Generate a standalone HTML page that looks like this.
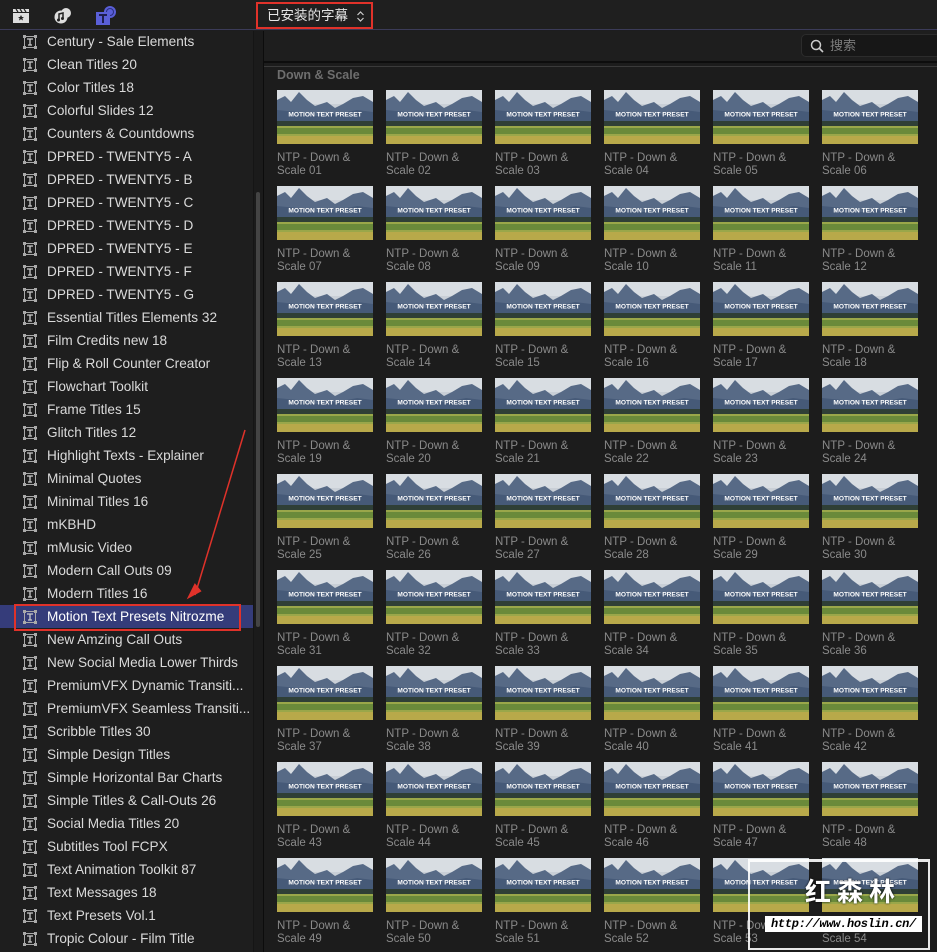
<!DOCTYPE html>
<html><head><meta charset="utf-8"><style>
*{margin:0;padding:0;box-sizing:border-box}
body{width:937px;height:952px;overflow:hidden;background:#1d1d1f;font-family:"Liberation Sans","Noto Sans CJK SC",sans-serif;position:relative}
#top{position:absolute;left:0;top:0;width:937px;height:30px;background:#1f1f1f;border-bottom:1px solid #3b3b58}
#dd{position:absolute;left:256px;top:2px;width:117px;height:27px;border:2px solid #e0322a;color:#e6e6e6;font-size:13.5px;line-height:23px;padding-left:9px}
#side{position:absolute;left:0;top:31px;width:253px;height:921px;background:#1e1e1e;overflow:hidden}
#track{position:absolute;left:253px;top:31px;width:10px;height:921px;background:#1b1b1b;border-left:1px solid #151515}
#thumb{position:absolute;left:256px;top:192px;width:4px;height:435px;background:#444;border-radius:2px}
#div{position:absolute;left:263px;top:31px;width:1px;height:921px;background:#0c0c0c}
.it{position:absolute;left:0;width:253px;height:23px;line-height:23px;color:#dadada;font-size:13.6px;padding-left:47px;white-space:nowrap}
.it svg{position:absolute;left:23px;top:5px}
.sel{background:#353c7a;color:#fff}
.selb{position:absolute;left:14px;top:604px;width:227px;height:27px;border:2px solid #e0322a}
#main{position:absolute;left:264px;top:31px;width:673px;height:921px;background:#1c1c1c}
#sbar{position:absolute;left:264px;top:31px;width:673px;height:32px;background:#1e1e1e;border-bottom:2px solid #0d0d0d}
#search{position:absolute;left:801px;top:34px;width:140px;height:23px;background:#171717;border:1px solid #2c2c2c;border-radius:5px;color:#7c7c7c;font-size:13px;line-height:21px;padding-left:28px}
#line2{position:absolute;left:264px;top:66px;width:673px;height:1px;background:#3a3a3a}
#hdr{position:absolute;left:277px;top:68px;color:#6e6e6e;font-size:12.5px;font-weight:bold}
.c{position:absolute;width:100px}
.c svg{display:block}
.c p{color:#8a8a8a;font-size:11.5px;line-height:13px;margin-top:8px}
#wm{position:absolute;left:748px;top:859px;width:182px;height:91px;border:2px solid rgba(255,255,255,.9);border-top-width:3px}
#wm1{position:absolute;left:805px;top:872px;color:#fff;font-size:26px;font-weight:bold;letter-spacing:6px;text-shadow:0 0 2px #000}
#wm2{position:absolute;left:765px;top:916px;width:157px;height:16px;background:#fff;color:#000;font:italic bold 12px "Liberation Mono",monospace;line-height:16px;text-align:center;letter-spacing:-0.3px}
</style></head><body>
<svg width="0" height="0" style="position:absolute"><defs>
<symbol id="t" viewBox="0 0 96 54">
<rect width="96" height="54" fill="#c9cfd6"/>
<rect width="96" height="14" fill="#d8dde2"/>
<polygon points="0,10 8,6 14,12 22,2 30,10 38,16 50,12 58,18 66,14 76,8 86,6 96,12 96,38 0,38" fill="#576a86"/>
<polygon points="0,20 20,22 40,26 60,24 80,20 96,22 96,38 0,38" fill="#465a78"/>
<rect y="31" width="96" height="5" fill="#2f3f36"/>
<rect y="36" width="96" height="18" fill="#9aa74a"/>
<rect y="38" width="96" height="6" fill="#6a8a3a"/>
<rect y="46" width="96" height="8" fill="#b8a94a"/>
<text x="48" y="26.5" fill="#fff" font-size="6.6" font-weight="bold" text-anchor="middle" font-family="Liberation Sans,sans-serif">MOTION TEXT PRESET</text>
</symbol>
<symbol id="ic" viewBox="0 0 14 14"><rect x="1.5" y="1.5" width="11" height="11" fill="none" stroke="#aaa" stroke-width="1"/><rect x="0" y="0" width="3" height="3" fill="#aaa"/><rect x="11" y="0" width="3" height="3" fill="#aaa"/><rect x="0" y="11" width="3" height="3" fill="#aaa"/><rect x="11" y="11" width="3" height="3" fill="#aaa"/><path d="M4 4H10M7 4V10M5 10H9" stroke="#ccc" stroke-width="1.3" fill="none"/></symbol>
</defs></svg>
<div id="top">
<svg style="position:absolute;left:12px;top:7px" width="18" height="17" viewBox="0 0 18 17"><rect x="1" y="6" width="16" height="10" fill="#ddd"/><path d="M1 2L17 2L17 5L1 5Z" fill="#ddd"/><path d="M4 2l2 3M8 2l2 3M12 2l2 3" stroke="#222" stroke-width="1.2"/><path d="M9 8l1 2h2l-1.6 1.3.6 2.2L9 12.3 7 13.5l.6-2.2L6 10h2z" fill="#222"/></svg>
<svg style="position:absolute;left:53px;top:6px" width="20" height="19" viewBox="0 0 20 19"><circle cx="13" cy="7" r="5" fill="#ddd"/><circle cx="8" cy="11" r="6.5" fill="#ddd"/><path d="M6 14V8l4-1v5" stroke="#222" stroke-width="1.5" fill="none"/><circle cx="5.5" cy="14" r="1.5" fill="#222"/><circle cx="9.5" cy="12.5" r="1.5" fill="#222"/></svg>
<svg style="position:absolute;left:95px;top:5px" width="22" height="20" viewBox="0 0 22 20"><circle cx="15" cy="7" r="6" fill="#5a5fd8"/><circle cx="15" cy="7" r="3.5" fill="none" stroke="#2a2e80" stroke-width="1"/><rect x="1" y="7" width="14" height="13" fill="#5a5fd8"/><path d="M4 10H12M8 10V18" stroke="#1e1e50" stroke-width="2"/></svg>
<div id="dd">已安装的字幕<svg style="position:absolute;left:98px;top:7px" width="9" height="11" viewBox="0 0 9 11"><path d="M1.5 4L4.5 1L7.5 4M1.5 7L4.5 10L7.5 7" stroke="#ccc" stroke-width="1.2" fill="none"/></svg></div>
</div>
<div id="side">
<div class="it" style="top:-1px"><svg width="14" height="14"><use href="#ic"/></svg>Century - Sale Elements</div>
<div class="it" style="top:22px"><svg width="14" height="14"><use href="#ic"/></svg>Clean Titles 20</div>
<div class="it" style="top:45px"><svg width="14" height="14"><use href="#ic"/></svg>Color Titles 18</div>
<div class="it" style="top:68px"><svg width="14" height="14"><use href="#ic"/></svg>Colorful Slides 12</div>
<div class="it" style="top:91px"><svg width="14" height="14"><use href="#ic"/></svg>Counters &amp; Countdowns</div>
<div class="it" style="top:114px"><svg width="14" height="14"><use href="#ic"/></svg>DPRED - TWENTY5 - A</div>
<div class="it" style="top:137px"><svg width="14" height="14"><use href="#ic"/></svg>DPRED - TWENTY5 - B</div>
<div class="it" style="top:160px"><svg width="14" height="14"><use href="#ic"/></svg>DPRED - TWENTY5 - C</div>
<div class="it" style="top:183px"><svg width="14" height="14"><use href="#ic"/></svg>DPRED - TWENTY5 - D</div>
<div class="it" style="top:206px"><svg width="14" height="14"><use href="#ic"/></svg>DPRED - TWENTY5 - E</div>
<div class="it" style="top:229px"><svg width="14" height="14"><use href="#ic"/></svg>DPRED - TWENTY5 - F</div>
<div class="it" style="top:252px"><svg width="14" height="14"><use href="#ic"/></svg>DPRED - TWENTY5 - G</div>
<div class="it" style="top:275px"><svg width="14" height="14"><use href="#ic"/></svg>Essential Titles Elements 32</div>
<div class="it" style="top:298px"><svg width="14" height="14"><use href="#ic"/></svg>Film Credits new 18</div>
<div class="it" style="top:321px"><svg width="14" height="14"><use href="#ic"/></svg>Flip &amp; Roll Counter Creator</div>
<div class="it" style="top:344px"><svg width="14" height="14"><use href="#ic"/></svg>Flowchart Toolkit</div>
<div class="it" style="top:367px"><svg width="14" height="14"><use href="#ic"/></svg>Frame Titles 15</div>
<div class="it" style="top:390px"><svg width="14" height="14"><use href="#ic"/></svg>Glitch Titles 12</div>
<div class="it" style="top:413px"><svg width="14" height="14"><use href="#ic"/></svg>Highlight Texts - Explainer</div>
<div class="it" style="top:436px"><svg width="14" height="14"><use href="#ic"/></svg>Minimal Quotes</div>
<div class="it" style="top:459px"><svg width="14" height="14"><use href="#ic"/></svg>Minimal Titles 16</div>
<div class="it" style="top:482px"><svg width="14" height="14"><use href="#ic"/></svg>mKBHD</div>
<div class="it" style="top:505px"><svg width="14" height="14"><use href="#ic"/></svg>mMusic Video</div>
<div class="it" style="top:528px"><svg width="14" height="14"><use href="#ic"/></svg>Modern Call Outs 09</div>
<div class="it" style="top:551px"><svg width="14" height="14"><use href="#ic"/></svg>Modern Titles 16</div>
<div class="it sel" style="top:574px"><svg width="14" height="14"><use href="#ic"/></svg>Motion Text Presets Nitrozme</div>
<div class="it" style="top:597px"><svg width="14" height="14"><use href="#ic"/></svg>New Amzing Call Outs</div>
<div class="it" style="top:620px"><svg width="14" height="14"><use href="#ic"/></svg>New Social Media Lower Thirds</div>
<div class="it" style="top:643px"><svg width="14" height="14"><use href="#ic"/></svg>PremiumVFX Dynamic Transiti...</div>
<div class="it" style="top:666px"><svg width="14" height="14"><use href="#ic"/></svg>PremiumVFX Seamless Transiti...</div>
<div class="it" style="top:689px"><svg width="14" height="14"><use href="#ic"/></svg>Scribble Titles 30</div>
<div class="it" style="top:712px"><svg width="14" height="14"><use href="#ic"/></svg>Simple Design Titles</div>
<div class="it" style="top:735px"><svg width="14" height="14"><use href="#ic"/></svg>Simple Horizontal Bar Charts</div>
<div class="it" style="top:758px"><svg width="14" height="14"><use href="#ic"/></svg>Simple Titles &amp; Call-Outs 26</div>
<div class="it" style="top:781px"><svg width="14" height="14"><use href="#ic"/></svg>Social Media Titles 20</div>
<div class="it" style="top:804px"><svg width="14" height="14"><use href="#ic"/></svg>Subtitles Tool FCPX</div>
<div class="it" style="top:827px"><svg width="14" height="14"><use href="#ic"/></svg>Text Animation Toolkit 87</div>
<div class="it" style="top:850px"><svg width="14" height="14"><use href="#ic"/></svg>Text Messages 18</div>
<div class="it" style="top:873px"><svg width="14" height="14"><use href="#ic"/></svg>Text Presets Vol.1</div>
<div class="it" style="top:896px"><svg width="14" height="14"><use href="#ic"/></svg>Tropic Colour - Film Title</div>
</div>
<div class="selb"></div>
<svg style="position:absolute;left:185px;top:425px" width="65" height="180"><path d="M60 5L10 170" stroke="#e0322a" stroke-width="1.5"/><path d="M4 172L10 160L15 166Z" fill="#e0322a" stroke="#e0322a" stroke-width="2"/></svg>
<div id="track"></div><div id="thumb"></div><div id="div"></div>
<div id="main"></div>
<div id="sbar"></div>
<div id="search"><svg style="position:absolute;left:8px;top:4px" width="14" height="14"><circle cx="6" cy="6" r="4.5" stroke="#ccc" stroke-width="1.5" fill="none"/><path d="M9.5 9.5L13 13" stroke="#ccc" stroke-width="1.6"/></svg>搜索</div>
<div id="line2"></div>
<div id="hdr">Down &amp; Scale</div>
<div class="c" style="left:277px;top:90px"><svg width="96" height="54"><use href="#t"/></svg><p>NTP - Down &amp;<br>Scale 01</p></div>
<div class="c" style="left:386px;top:90px"><svg width="96" height="54"><use href="#t"/></svg><p>NTP - Down &amp;<br>Scale 02</p></div>
<div class="c" style="left:495px;top:90px"><svg width="96" height="54"><use href="#t"/></svg><p>NTP - Down &amp;<br>Scale 03</p></div>
<div class="c" style="left:604px;top:90px"><svg width="96" height="54"><use href="#t"/></svg><p>NTP - Down &amp;<br>Scale 04</p></div>
<div class="c" style="left:713px;top:90px"><svg width="96" height="54"><use href="#t"/></svg><p>NTP - Down &amp;<br>Scale 05</p></div>
<div class="c" style="left:822px;top:90px"><svg width="96" height="54"><use href="#t"/></svg><p>NTP - Down &amp;<br>Scale 06</p></div>
<div class="c" style="left:277px;top:186px"><svg width="96" height="54"><use href="#t"/></svg><p>NTP - Down &amp;<br>Scale 07</p></div>
<div class="c" style="left:386px;top:186px"><svg width="96" height="54"><use href="#t"/></svg><p>NTP - Down &amp;<br>Scale 08</p></div>
<div class="c" style="left:495px;top:186px"><svg width="96" height="54"><use href="#t"/></svg><p>NTP - Down &amp;<br>Scale 09</p></div>
<div class="c" style="left:604px;top:186px"><svg width="96" height="54"><use href="#t"/></svg><p>NTP - Down &amp;<br>Scale 10</p></div>
<div class="c" style="left:713px;top:186px"><svg width="96" height="54"><use href="#t"/></svg><p>NTP - Down &amp;<br>Scale 11</p></div>
<div class="c" style="left:822px;top:186px"><svg width="96" height="54"><use href="#t"/></svg><p>NTP - Down &amp;<br>Scale 12</p></div>
<div class="c" style="left:277px;top:282px"><svg width="96" height="54"><use href="#t"/></svg><p>NTP - Down &amp;<br>Scale 13</p></div>
<div class="c" style="left:386px;top:282px"><svg width="96" height="54"><use href="#t"/></svg><p>NTP - Down &amp;<br>Scale 14</p></div>
<div class="c" style="left:495px;top:282px"><svg width="96" height="54"><use href="#t"/></svg><p>NTP - Down &amp;<br>Scale 15</p></div>
<div class="c" style="left:604px;top:282px"><svg width="96" height="54"><use href="#t"/></svg><p>NTP - Down &amp;<br>Scale 16</p></div>
<div class="c" style="left:713px;top:282px"><svg width="96" height="54"><use href="#t"/></svg><p>NTP - Down &amp;<br>Scale 17</p></div>
<div class="c" style="left:822px;top:282px"><svg width="96" height="54"><use href="#t"/></svg><p>NTP - Down &amp;<br>Scale 18</p></div>
<div class="c" style="left:277px;top:378px"><svg width="96" height="54"><use href="#t"/></svg><p>NTP - Down &amp;<br>Scale 19</p></div>
<div class="c" style="left:386px;top:378px"><svg width="96" height="54"><use href="#t"/></svg><p>NTP - Down &amp;<br>Scale 20</p></div>
<div class="c" style="left:495px;top:378px"><svg width="96" height="54"><use href="#t"/></svg><p>NTP - Down &amp;<br>Scale 21</p></div>
<div class="c" style="left:604px;top:378px"><svg width="96" height="54"><use href="#t"/></svg><p>NTP - Down &amp;<br>Scale 22</p></div>
<div class="c" style="left:713px;top:378px"><svg width="96" height="54"><use href="#t"/></svg><p>NTP - Down &amp;<br>Scale 23</p></div>
<div class="c" style="left:822px;top:378px"><svg width="96" height="54"><use href="#t"/></svg><p>NTP - Down &amp;<br>Scale 24</p></div>
<div class="c" style="left:277px;top:474px"><svg width="96" height="54"><use href="#t"/></svg><p>NTP - Down &amp;<br>Scale 25</p></div>
<div class="c" style="left:386px;top:474px"><svg width="96" height="54"><use href="#t"/></svg><p>NTP - Down &amp;<br>Scale 26</p></div>
<div class="c" style="left:495px;top:474px"><svg width="96" height="54"><use href="#t"/></svg><p>NTP - Down &amp;<br>Scale 27</p></div>
<div class="c" style="left:604px;top:474px"><svg width="96" height="54"><use href="#t"/></svg><p>NTP - Down &amp;<br>Scale 28</p></div>
<div class="c" style="left:713px;top:474px"><svg width="96" height="54"><use href="#t"/></svg><p>NTP - Down &amp;<br>Scale 29</p></div>
<div class="c" style="left:822px;top:474px"><svg width="96" height="54"><use href="#t"/></svg><p>NTP - Down &amp;<br>Scale 30</p></div>
<div class="c" style="left:277px;top:570px"><svg width="96" height="54"><use href="#t"/></svg><p>NTP - Down &amp;<br>Scale 31</p></div>
<div class="c" style="left:386px;top:570px"><svg width="96" height="54"><use href="#t"/></svg><p>NTP - Down &amp;<br>Scale 32</p></div>
<div class="c" style="left:495px;top:570px"><svg width="96" height="54"><use href="#t"/></svg><p>NTP - Down &amp;<br>Scale 33</p></div>
<div class="c" style="left:604px;top:570px"><svg width="96" height="54"><use href="#t"/></svg><p>NTP - Down &amp;<br>Scale 34</p></div>
<div class="c" style="left:713px;top:570px"><svg width="96" height="54"><use href="#t"/></svg><p>NTP - Down &amp;<br>Scale 35</p></div>
<div class="c" style="left:822px;top:570px"><svg width="96" height="54"><use href="#t"/></svg><p>NTP - Down &amp;<br>Scale 36</p></div>
<div class="c" style="left:277px;top:666px"><svg width="96" height="54"><use href="#t"/></svg><p>NTP - Down &amp;<br>Scale 37</p></div>
<div class="c" style="left:386px;top:666px"><svg width="96" height="54"><use href="#t"/></svg><p>NTP - Down &amp;<br>Scale 38</p></div>
<div class="c" style="left:495px;top:666px"><svg width="96" height="54"><use href="#t"/></svg><p>NTP - Down &amp;<br>Scale 39</p></div>
<div class="c" style="left:604px;top:666px"><svg width="96" height="54"><use href="#t"/></svg><p>NTP - Down &amp;<br>Scale 40</p></div>
<div class="c" style="left:713px;top:666px"><svg width="96" height="54"><use href="#t"/></svg><p>NTP - Down &amp;<br>Scale 41</p></div>
<div class="c" style="left:822px;top:666px"><svg width="96" height="54"><use href="#t"/></svg><p>NTP - Down &amp;<br>Scale 42</p></div>
<div class="c" style="left:277px;top:762px"><svg width="96" height="54"><use href="#t"/></svg><p>NTP - Down &amp;<br>Scale 43</p></div>
<div class="c" style="left:386px;top:762px"><svg width="96" height="54"><use href="#t"/></svg><p>NTP - Down &amp;<br>Scale 44</p></div>
<div class="c" style="left:495px;top:762px"><svg width="96" height="54"><use href="#t"/></svg><p>NTP - Down &amp;<br>Scale 45</p></div>
<div class="c" style="left:604px;top:762px"><svg width="96" height="54"><use href="#t"/></svg><p>NTP - Down &amp;<br>Scale 46</p></div>
<div class="c" style="left:713px;top:762px"><svg width="96" height="54"><use href="#t"/></svg><p>NTP - Down &amp;<br>Scale 47</p></div>
<div class="c" style="left:822px;top:762px"><svg width="96" height="54"><use href="#t"/></svg><p>NTP - Down &amp;<br>Scale 48</p></div>
<div class="c" style="left:277px;top:858px"><svg width="96" height="54"><use href="#t"/></svg><p>NTP - Down &amp;<br>Scale 49</p></div>
<div class="c" style="left:386px;top:858px"><svg width="96" height="54"><use href="#t"/></svg><p>NTP - Down &amp;<br>Scale 50</p></div>
<div class="c" style="left:495px;top:858px"><svg width="96" height="54"><use href="#t"/></svg><p>NTP - Down &amp;<br>Scale 51</p></div>
<div class="c" style="left:604px;top:858px"><svg width="96" height="54"><use href="#t"/></svg><p>NTP - Down &amp;<br>Scale 52</p></div>
<div class="c" style="left:713px;top:858px"><svg width="96" height="54"><use href="#t"/></svg><p>NTP - Down &amp;<br>Scale 53</p></div>
<div class="c" style="left:822px;top:858px"><svg width="96" height="54"><use href="#t"/></svg><p>NTP - Down &amp;<br>Scale 54</p></div>
<div id="wm"></div>
<div id="wm1">红森林</div>
<div id="wm2">http://www.hoslin.cn/</div>
</body></html>
